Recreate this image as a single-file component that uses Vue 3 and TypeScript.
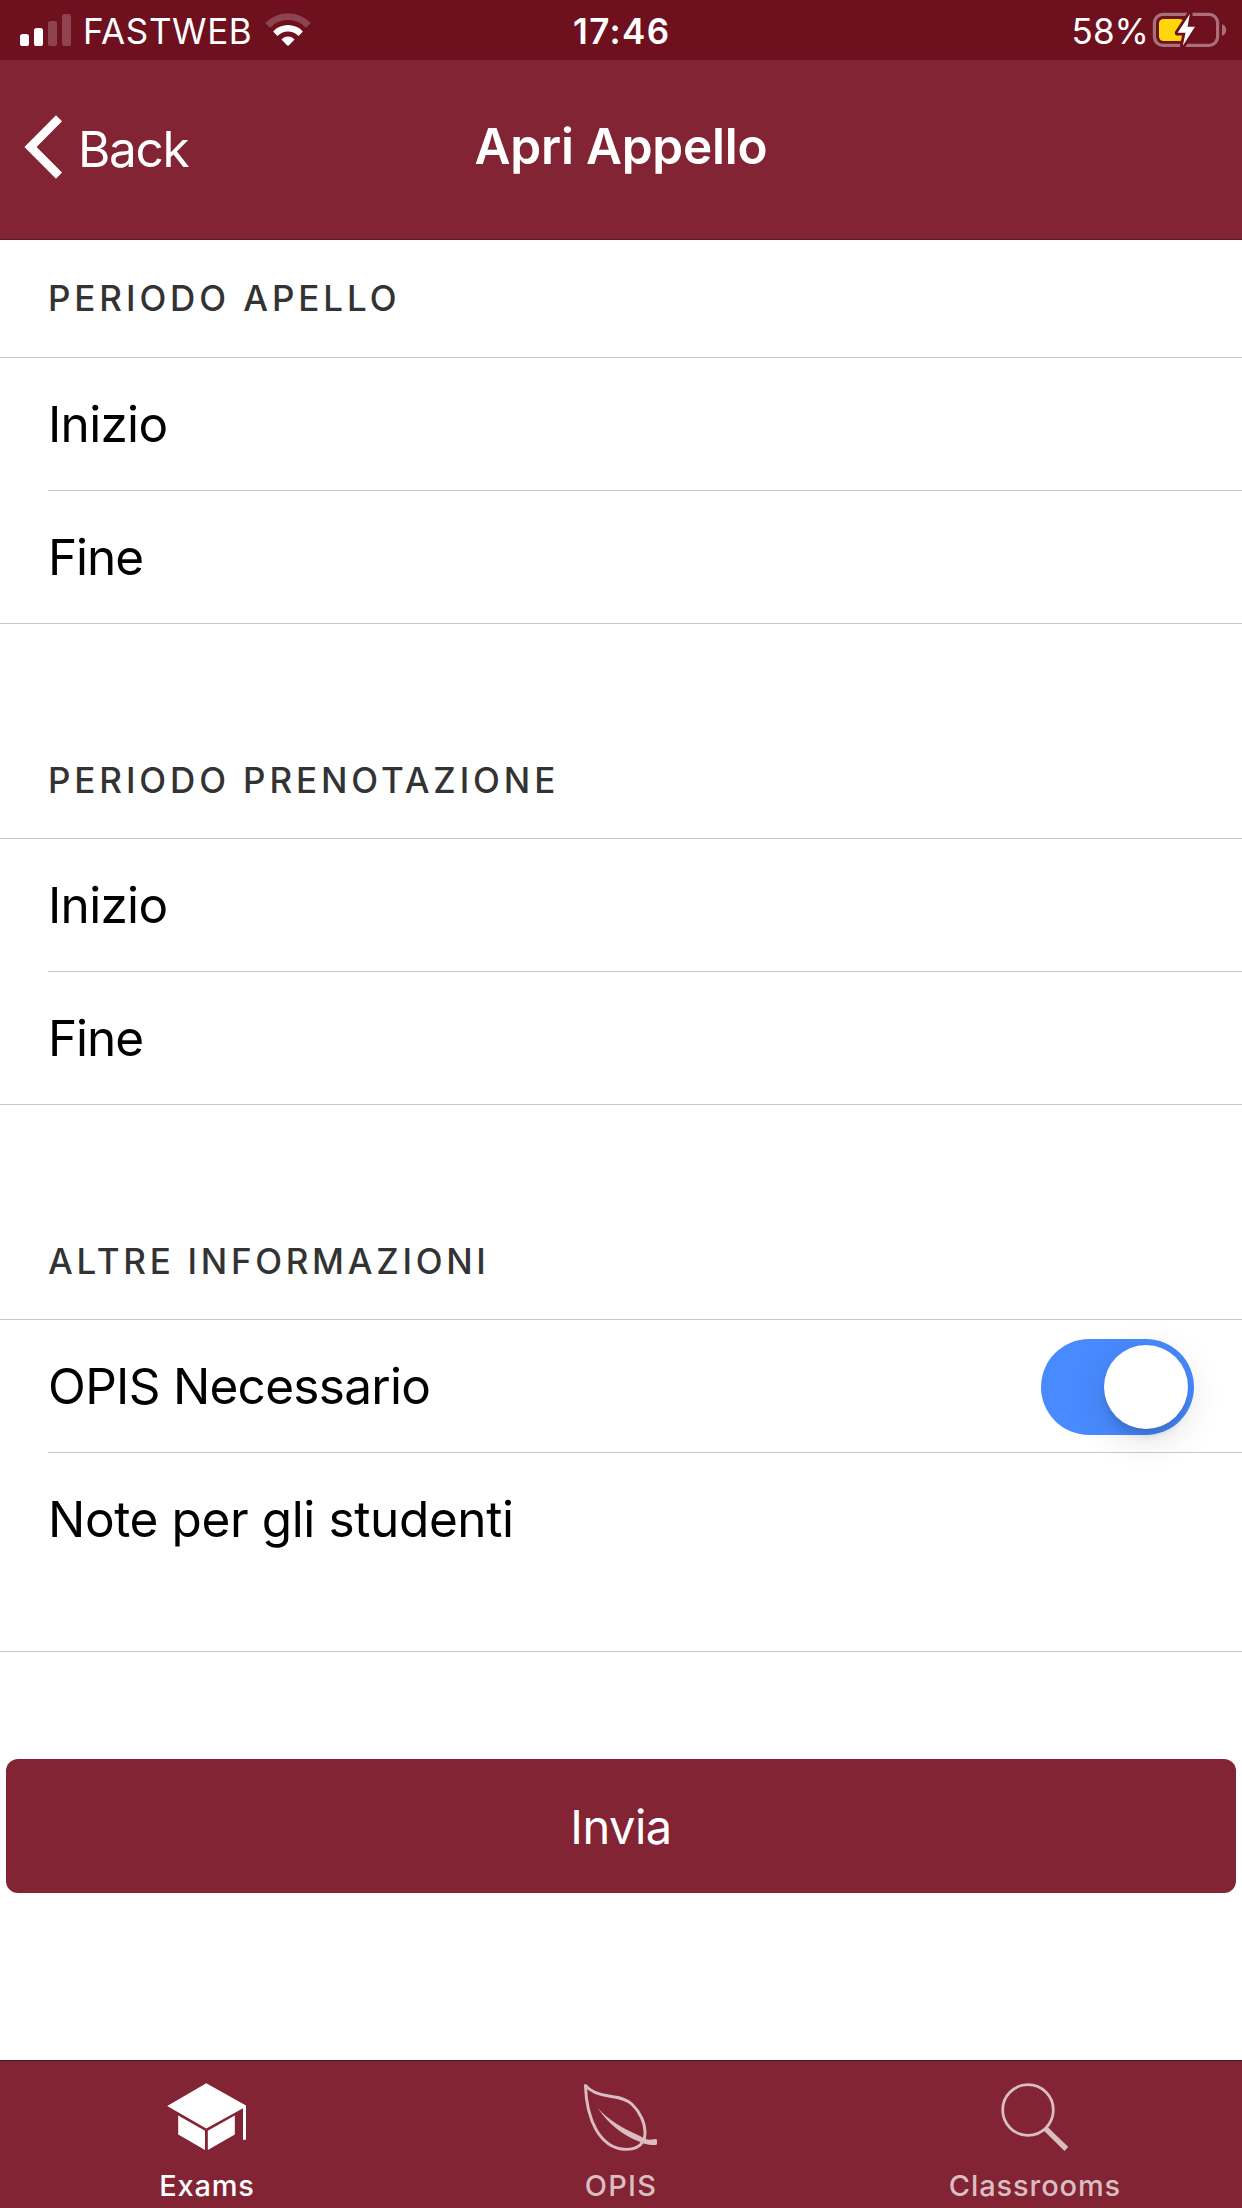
<script setup lang="ts">
import { ref } from 'vue'

interface Row {
  label: string
  spacing: number
  toggle?: boolean
  tall?: boolean
}

interface Section {
  title: string
  spacing: number
  rows: Row[]
}

interface Tab {
  id: 'exams' | 'opis' | 'classrooms'
  label: string
  spacing: number
}

const sections: Section[] = [
  {
    title: 'Periodo Apello',
    spacing: 3.9,
    rows: [
      { label: 'Inizio', spacing: -0.69 },
      { label: 'Fine', spacing: -1.1 },
    ],
  },
  {
    title: 'Periodo Prenotazione',
    spacing: 3.88,
    rows: [
      { label: 'Inizio', spacing: -0.69 },
      { label: 'Fine', spacing: -1.1 },
    ],
  },
  {
    title: 'Altre Informazioni',
    spacing: 3.7,
    rows: [
      { label: 'OPIS Necessario', spacing: -0.71, toggle: true },
      { label: 'Note per gli studenti', spacing: -0.38, tall: true },
    ],
  },
]

const tabs: Tab[] = [
  { id: 'exams', label: 'Exams', spacing: 0.79 },
  { id: 'opis', label: 'OPIS', spacing: 1.25 },
  { id: 'classrooms', label: 'Classrooms', spacing: 0.89 },
]

const activeTab = ref<Tab['id']>('exams')
const opisRequired = ref(true)
</script>

<template>
  <div class="screen">
    <div class="status">
      <div class="status-left">
        <svg class="signal" width="51" height="32" viewBox="0 0 51 32" fill="#fff">
          <rect x="0" y="20" width="9" height="12" rx="2.6" />
          <rect x="14" y="14" width="9" height="18" rx="2.6" />
          <rect x="28" y="7" width="9" height="25" rx="2.6" opacity=".22" />
          <rect x="42" y="0" width="9" height="32" rx="2.6" opacity=".22" />
        </svg>
        <span class="carrier">FASTWEB</span>
        <svg class="wifi" width="48" height="38" viewBox="0 0 48 38" fill="#fff">
          <path opacity=".22" d="M1.8 13.6Q1.2 13 1.8 12.4A31.5 31.5 0 0 1 46.2 12.4Q46.8 13 46.2 13.6L42.6 17.2Q42 17.8 41.4 17.2A24.6 24.6 0 0 0 6.6 17.2Q6 17.8 5.4 17.2Z" />
          <path d="M9.6 22.1Q9 21.5 9.6 20.9A20.5 20.5 0 0 1 38.4 20.9Q39 21.5 38.4 22.1L35.1 25.4Q34.5 26 33.9 25.4A14.2 14.2 0 0 0 14.1 25.4Q13.5 26 12.9 25.4Z" />
          <path d="M17.9 30.1Q17.4 29.5 17.9 29A8.9 8.9 0 0 1 30.1 29Q30.6 29.5 30.1 30.1L24.7 35.4Q24 36 23.3 35.4Z" />
        </svg>
      </div>
      <span class="clock">17:46</span>
      <div class="status-right">
        <span class="percent">58%</span>
        <svg class="battery" width="86" height="48" viewBox="0 0 86 48">
          <rect x="8.4" y="8.3" width="63.2" height="31" rx="8.5" fill="none" stroke="#a97079" stroke-width="3.2" />
          <path d="M76 18Q80.2 20 80.2 24T76 30Z" fill="#a97079" />
          <rect x="13" y="13" width="25" height="22" rx="4.5" fill="#ffd60a" />
          <path d="M43.9 8L41.5 20.7H49L36.8 39.8L39.5 26.7H31.6Z" fill="#fff" stroke="#6e101e" stroke-width="5.6" stroke-linejoin="round" paint-order="stroke" />
        </svg>
      </div>
    </div>

    <header class="nav">
      <button class="back" type="button">
        <svg width="40" height="66" viewBox="0 0 40 66">
          <path d="M32 1.2L38 7.2L12.6 33L38 58.6L32 64.8L.4 33Z" fill="#fff" />
        </svg>
        <span>Back</span>
      </button>
      <h1>Apri Appello</h1>
    </header>

    <main>
      <section v-for="s in sections" :key="s.title">
        <h2 :style="{ letterSpacing: s.spacing + 'px' }">{{ s.title }}</h2>
        <div class="list">
          <div v-for="r in s.rows" :key="r.label" class="row" :class="{ tall: r.tall }">
            <span class="label" :style="{ letterSpacing: r.spacing + 'px' }">{{ r.label }}</span>
            <button
              v-if="r.toggle"
              type="button"
              class="toggle"
              :class="{ on: opisRequired }"
              @click="opisRequired = !opisRequired"
            >
              <i class="knob"></i>
            </button>
          </div>
        </div>
      </section>
      <button class="submit" type="button">Invia</button>
    </main>

    <nav class="tabs">
      <button
        v-for="t in tabs"
        :key="t.id"
        type="button"
        class="tab"
        :class="{ active: t.id === activeTab }"
        @click="activeTab = t.id"
      >
        <svg width="84" height="84" viewBox="0 0 84 84">
          <g v-if="t.id === 'exams'" fill="currentColor">
            <path d="M41.3 7.2L81 29.6V63.8H78V32.2L41.3 52.6L2.2 30Z" />
            <path d="M13.2 39.4L40 54.8V74L13.2 58.6Z" />
            <path d="M69.8 39.4L42.8 54.8V74L69.8 58.6Z" />
          </g>
          <g v-else-if="t.id === 'opis'">
            <path d="M6.4 9.4C12 16.5 21 18.9 31 20.3C42 21.9 48 23.5 53 28.2C61 35.8 66 47 66 56C66 60 65.8 62.5 64.3 65C60 72.5 53 73.8 45 73.3C33 72.5 24 65.5 17 53.5C10 41 7 26 6.4 9.4Z" fill="none" stroke="currentColor" stroke-width="2.9" stroke-linejoin="round" />
            <path d="M18.3 31.5C30 44.5 44 52.6 60 59.5C64 61.4 66.5 63.7 70 63.8Q74 63.8 76.5 63.1Q78 63 78 64.5V67.5Q78 69 76.5 69C69 69.2 66 68.2 60 65.6C42 58 30 48.5 18.3 31.5Z" fill="currentColor" />
          </g>
          <g v-else fill="none" stroke="currentColor">
            <circle cx="35" cy="34" r="25.3" stroke-width="2.8" />
            <path d="M52.3 52.4L73.4 73" stroke-width="5.4" />
          </g>
        </svg>
        <span :style="{ letterSpacing: t.spacing + 'px' }">{{ t.label }}</span>
      </button>
    </nav>
  </div>
</template>

<style>
body {
  background: #fff;
}
</style>

<style scoped>
.screen {
  width: 1242px;
  height: 2208px;
  display: flex;
  flex-direction: column;
  background: #fff;
  color: #000;
  font-family: Inter, 'Liberation Sans', sans-serif;
  overflow: hidden;
}

button {
  margin: 0;
  padding: 0;
  border: 0;
  background: none;
  color: inherit;
  font: inherit;
}

svg {
  display: block;
  flex: none;
}

/* Status bar */
.status {
  flex: none;
  height: 60px;
  box-sizing: border-box;
  display: grid;
  grid-template-columns: 1fr auto 1fr;
  background: #6e101e;
  color: #fff;
  font-size: 35px;
  line-height: 62px;
  white-space: nowrap;
}

.status-left,
.status-right {
  display: flex;
  align-items: flex-start;
}

.status-right {
  justify-content: flex-end;
}

.signal {
  margin: 14px 0 0 20px;
}

.carrier {
  width: 180px;
  padding-left: 12px;
  box-sizing: border-box;
  letter-spacing: 0.6px;
}

.wifi {
  margin: 10px 0 0 13px;
}

.clock {
  padding-left: 1.6px;
  font-weight: 600;
  letter-spacing: 1.4px;
}

.percent {
  letter-spacing: 0.04px;
}

.battery {
  margin: 6px 10px 0 -3px;
}

/* Navigation bar */
.nav {
  flex: none;
  height: 180px;
  box-sizing: border-box;
  display: grid;
  grid-template-columns: 1fr auto 1fr;
  background: #822433;
  border-bottom: 1px solid #5e1a26;
  color: #fff;
  font-size: 49.5px;
}

.back {
  display: flex;
  align-items: flex-start;
  padding: 54px 0 0 24px;
  line-height: 70px;
  letter-spacing: -1.3px;
}

.back span {
  margin-left: 14px;
}

.nav h1 {
  margin: 0;
  font-size: 49.5px;
  font-weight: 600;
  line-height: 172px;
  letter-spacing: -0.22px;
}

/* Form */
main {
  flex: 1;
}

section + section {
  margin-top: 97px;
}

h2 {
  margin: 0;
  padding-left: 48px;
  height: 117px;
  line-height: 118px;
  font-size: 35px;
  font-weight: 500;
  color: #333;
  text-transform: uppercase;
}

section:first-child h2 {
  line-height: 116px;
}

.list {
  border-top: 1px solid #c8c7cc;
  border-bottom: 1px solid #c8c7cc;
}

.row {
  display: flex;
  justify-content: space-between;
  align-items: flex-start;
  height: 132px;
  margin-left: 48px;
}

.row + .row {
  border-top: 1px solid #c8c7cc;
}

.row.tall {
  height: 198px;
}

.label {
  font-size: 49.5px;
  line-height: 132px;
}

.toggle {
  width: 153px;
  height: 96px;
  margin: 19px 48px 0 0;
  padding: 6px;
  border-radius: 48px;
  display: flex;
  background: #e6e6e6;
}

.toggle.on {
  justify-content: flex-end;
  background: #488aff;
}

.knob {
  width: 84px;
  height: 84px;
  border-radius: 50%;
  background: #fff;
  box-shadow: 0 9px 36px rgba(0, 0, 0, 0.14), 0 9px 9px -3px rgba(0, 0, 0, 0.12);
}

.submit {
  display: block;
  width: 1230px;
  height: 134px;
  margin: 107px 6px 0;
  border-radius: 12px;
  background: #822433;
  color: #fff;
  font-size: 47px;
  line-height: 136px;
  letter-spacing: -0.48px;
  text-align: center;
}

/* Tab bar */
.tabs {
  flex: none;
  height: 148px;
  box-sizing: border-box;
  display: grid;
  grid-template-columns: repeat(3, 1fr);
  background: #822433;
  border-top: 1px solid #42181f;
}

.tab {
  display: flex;
  flex-direction: column;
  align-items: center;
  padding-top: 15px;
  color: #dabdc1;
  font-size: 29px;
  font-weight: 500;
  line-height: 36px;
}

.tab span {
  margin-top: 8px;
}

.tab.active {
  color: #fff;
}
</style>
